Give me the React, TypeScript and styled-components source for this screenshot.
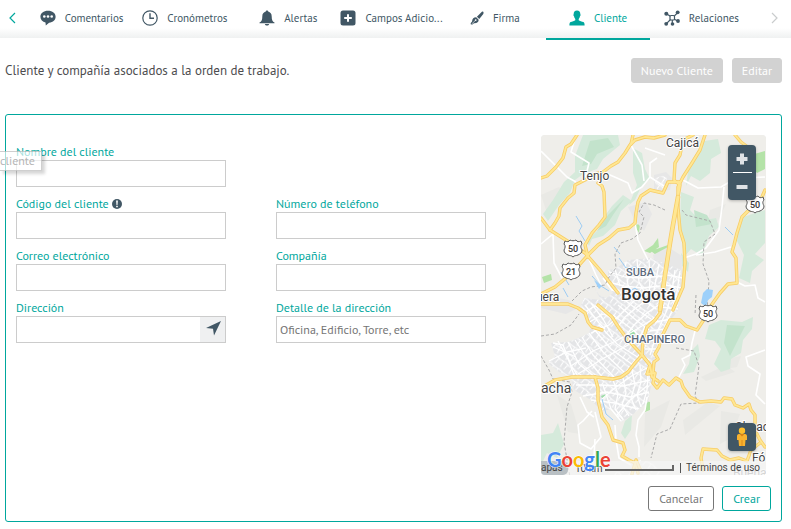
import React, { useId } from "react";
import styled, { createGlobalStyle, css } from "styled-components";

const teal = "#00a79d";
const slate = "#415765";

const GlobalStyle = createGlobalStyle`
  *, *::before, *::after { box-sizing: border-box; }
  body {
    margin: 0;
    background: #fff;
    color: #4d4d4f;
    font-family: "PT Sans", "Noto Sans", sans-serif;
    font-size: 12px;
    overflow-x: hidden;
  }
  button, input { font: inherit; }
`;

/* ---------- Tab bar ---------- */

const TabBar = styled.nav`
  display: flex;
  height: 38px;
  background: linear-gradient(#fff 28px, #eff1f1 38px);
`;

const TabList = styled.div`
  display: flex;
  flex: 1;
  min-width: 0;
`;

const Arrow = styled.button<{ $wide?: boolean; $muted?: boolean }>`
  display: flex;
  flex: none;
  align-items: center;
  justify-content: ${(p) => (p.$wide ? "center" : "flex-start")};
  width: ${(p) => (p.$wide ? 38 : 30)}px;
  height: 36px;
  padding: ${(p) => (p.$wide ? "0 0 0 4px" : "0 0 0 9px")};
  border: 0;
  background: none;
  color: ${(p) => (p.$muted ? "#c9cccd" : teal)};
`;

const Tab = styled.button<{ $active?: boolean }>`
  display: flex;
  flex: 1 1 0;
  align-items: center;
  justify-content: center;
  gap: 9px;
  min-width: 0;
  height: 40px;
  padding: 0 0 2px;
  border: 0;
  border-bottom: 2px solid ${(p) => (p.$active ? teal : "transparent")};
  background: none;
  color: ${(p) => (p.$active ? teal : slate)};
  font-size: 11px;
  white-space: nowrap;
  svg { flex: none; }
`;

/* ---------- Page ---------- */

const Page = styled.main`
  padding: 20px 9px 7px 5px;
`;

const Heading = styled.header`
  display: flex;
  align-items: center;
  gap: 9px;
  margin-bottom: 31px;
`;

const Title = styled.p`
  flex: 1;
  margin: 0;
  font-size: 13px;
  line-height: 25px;
`;

const Button = styled.button<{ $kind: "disabled" | "plain" | "primary" }>`
  height: 25px;
  padding: 0 10px;
  border: 1px solid;
  border-radius: 3px;
  background: #fff;
  font-size: 12px;
  line-height: 16px;
  white-space: nowrap;
  ${(p) =>
    p.$kind === "disabled" &&
    css`
      padding: 0 9px;
      border-color: #d2d2d2;
      background: #d2d2d2;
      color: #fff;
    `}
  ${(p) => p.$kind === "plain" && css`border-color: #777; color: #777;`}
  ${(p) => p.$kind === "primary" && css`border-color: ${teal}; color: ${teal};`}
`;

const Panel = styled.form`
  position: relative;
  padding: 20px 10px 10px;
  border: 1px solid ${teal};
  border-radius: 3px;
`;

const PanelBody = styled.div`
  display: flex;
  justify-content: space-between;
  gap: 30px;
  padding-right: 5px;
`;

const Fields = styled.div`
  display: grid;
  flex: 1;
  grid-template-columns: repeat(2, minmax(0, 210px));
  column-gap: 50px;
  row-gap: 9px;
  align-content: start;
  padding-top: 9px;
`;

const Field = styled.div<{ $rowStart?: boolean }>`
  ${(p) => p.$rowStart && css`grid-column-start: 1;`}
`;

const LabelRow = styled.div`
  display: flex;
  align-items: center;
  gap: 3px;
  height: 16px;
  color: ${teal};
  font-size: 12px;
  line-height: 18px;
`;

const InputBox = styled.div`
  display: flex;
  height: 27px;
  border: 1px solid #ccc;
  background: #fff;
`;

const Input = styled.input`
  flex: 1;
  min-width: 0;
  padding: 0 3px;
  border: 0;
  outline: 0;
  background: none;
  color: #4d4d4f;
  font-size: 12px;
  &::placeholder { color: #757575; opacity: 1; }
`;

const LocateButton = styled.button`
  display: flex;
  align-items: center;
  justify-content: center;
  width: 25px;
  padding: 0 0 2px 2px;
  border: 0;
  background: #eff0f1;
  color: ${slate};
`;

const Actions = styled.div`
  display: flex;
  justify-content: flex-end;
  gap: 8px;
  margin-top: 11px;
`;

const Tooltip = styled.div`
  position: absolute;
  top: 36px;
  left: -6px;
  padding: 0 6px 0 0;
  border: 1px solid rgba(118, 118, 118, 0.35);
  border-left: 0;
  background: rgba(255, 255, 255, 0.65);
  box-shadow: 3px 3px 3px rgba(0, 0, 0, 0.16);
  color: #b5b5b5;
  font-size: 12px;
  line-height: 18px;
`;

/* ---------- Map ---------- */

const MapFrame = styled.div`
  position: relative;
  flex: 0 0 225px;
  height: 340px;
  overflow: hidden;
  border-radius: 4px;
  background: #efeeea;
`;

const ZoomBox = styled.div`
  position: absolute;
  top: 10px;
  right: 10px;
  display: flex;
  flex-direction: column;
  align-items: center;
  width: 28px;
  border-radius: 4px;
  background: ${slate};
  box-shadow: 0 1px 3px rgba(0, 0, 0, 0.25);
`;

const ZoomButton = styled.button`
  display: flex;
  align-items: center;
  justify-content: center;
  width: 28px;
  height: 27px;
  padding: 0;
  border: 0;
  background: none;
  color: #dfe3e6;
`;

const ZoomRule = styled.span`
  width: 19px;
  height: 1px;
  background: #fff;
`;

const Pegman = styled.button`
  position: absolute;
  right: 10px;
  bottom: 24px;
  display: flex;
  align-items: center;
  justify-content: center;
  width: 28px;
  height: 28px;
  padding: 0;
  border: 0;
  border-radius: 4px;
  background: ${slate};
  box-shadow: 0 1px 3px rgba(0, 0, 0, 0.25);
`;

const MapFooter = styled.div`
  position: absolute;
  right: 0;
  bottom: 0;
  left: 0;
  display: flex;
  align-items: center;
  height: 14px;
  background: rgba(245, 245, 245, 0.7);
  color: #444;
  font-family: Roboto, sans-serif;
  font-size: 10px;
`;

const DataChip = styled.span`
  width: 27px;
  border-radius: 0 5px 5px 0;
  background: #b9c0c4;
  line-height: 14px;
`;

const ScaleText = styled.span`
  margin-left: 7px;
  width: 30px;
`;

const ScaleLine = styled.span`
  width: 69px;
  height: 6px;
  border: solid #666;
  border-width: 0 2px 2px 0;
`;

const Terms = styled.a`
  margin-left: 6px;
  padding-left: 5px;
  border-left: 1px solid #555;
  color: #444;
  line-height: 10px;
  white-space: nowrap;
  text-decoration: none;
`;

const GoogleMark = styled.a`
  position: absolute;
  bottom: 1px;
  left: 6px;
  height: 26px;
  text-decoration: none;
`;

/* ---------- Icons ---------- */

const Svg = ({ size = 16, children }: { size?: number; children: React.ReactNode }) => (
  <svg width={size} height={size} viewBox="0 0 16 16" fill="currentColor" aria-hidden="true">
    {children}
  </svg>
);

const CommentIcon = () => (
  <Svg>
    <path d="M8 .8C3.600.8.4 3.200.4 6.800c0 3 2.100 5 5.100 5.700L5.800 15.600l3.300-2.900c4-.3 6.500-2.700 6.500-5.900C15.600 3.200 12.400.8 8 .8z" />
    <g fill="#fff"><circle cx="4.300" cy="6.500" r="1.300" /><circle cx="8" cy="6.500" r="1.300" /><circle cx="11.700" cy="6.500" r="1.300" /></g>
  </Svg>
);
const ClockIcon = () => (
  <Svg>
    <g fill="none" stroke="currentColor" strokeWidth="1.200"><circle cx="8" cy="8" r="7.200" /><path d="M8 3.200V8.300h4" strokeWidth="1.400" /></g>
  </Svg>
);
const BellIcon = () => (
  <Svg>
    <path d="M8 .5c.8 0 1.200.5 1.200 1.100 2.200.6 3.500 2.400 3.500 4.800 0 3.600.8 4.900 2.800 6.200v.7H.5v-.7c2-1.300 2.800-2.600 2.800-6.200 0-2.400 1.300-4.200 3.500-4.800C6.800 1 7.200.5 8 .5zM5.800 14h4.400c-.4 1-1.100 1.500-2.200 1.500S6.200 15 5.800 14z" />
  </Svg>
);
const PlusBoxIcon = () => (
  <Svg>
    <rect x=".5" y=".5" width="15" height="15" rx="2.500" />
    <path d="M8 4.200v7.600M4.200 8h7.600" stroke="#fff" strokeWidth="2" />
  </Svg>
);
const BrushIcon = () => (
  <Svg size={14}>
    <path d="M14.500.7c1.100.2 1.300 1.600.7 2.700L10.600 9 7.900 6.500 13 1.400c.5-.5.900-.8 1.500-.7zM7.100 7.200l2.800 2.700c.1 2.500-1.900 4.200-5.200 4-.9.100-1.500 1.800-3.100 1.600-.8-.2-1.100-.9-.7-1.600.4-1 1.400-1 1.500-2.100.2-2.900 2-4.700 4.700-4.600z" />
    <path d="M2 14.800l4-3.900" stroke="#fff" strokeWidth=".7" /><circle cx="6.500" cy="10.300" r="1" fill="#fff" />
  </Svg>
);
const UserIcon = () => (
  <Svg>
    <path d="M8 .5c2.200 0 3.500 1.500 3.300 3.800.7.500.2 1.600-.3 2-.2 1.200-.6 2-1.300 2.600v1.300c1 .9 3.100 1.100 4.700 1.900 1 .5 1.200 1.600 1.200 3.400H.4c0-1.800.2-2.900 1.200-3.400 1.600-.8 3.700-1 4.700-1.900V8.900C5.600 8.300 5.200 7.500 5 6.300c-.5-.4-1-1.500-.3-2C4.500 2 5.800.5 8 .5z" />
  </Svg>
);
const NetworkIcon = () => (
  <Svg>
    <path d="M2.400 3.800l4 2.500M13.800 2.500L10 6.300M2.200 13.800L6.500 9.500M8.300 9v5M10 9l4 2.200" stroke="currentColor" strokeWidth="1.200" />
    <rect x="6" y="5.500" width="4.500" height="4.500" rx="1" fill="#fff" stroke="currentColor" strokeWidth="1.200" />
    <circle cx="2.300" cy="3.700" r="2" /><circle cx="13.700" cy="2.300" r="1.900" /><circle cx="2.200" cy="13.800" r="1.900" /><circle cx="8.500" cy="14" r="1.800" /><circle cx="14" cy="11" r="1.900" />
  </Svg>
);

/* ---------- Map drawing ---------- */

const highways = [
  "M36 0L30 9 25 12 22 23 15 32 6 41 0 43",
  "M124 0L113 3 104 2 94 5 89 10 84 18 77 27 70 31 62 37 54 39 44 45 34 50 33 58 27 63 19 73 18 81 14 88 9 95",
  "M92 0L90 9",
  "M57 48L61 51 63 57 64 82 58 90 51 98 44 110 47 122",
  "M0 83L9 95 28 107 44 118 59 135 77 158",
  "M139 47L127 47 122 58 109 55 100 61 97 67 95 78 94 88 88 93 77 95 68 103 57 110 47 120 31 138 14 152 0 159",
  "M152 0L142 5 139 20 134 28 133 45 139 50 137 62 132 90 129 108 124 140 119 175",
  "M164 0L159 15 151 28 142 42 137 52 137 73 139 95 143 108 144 128 142 152 132 175",
  "M194 0L200 7 208 13",
  "M224 55L221 62 216 72 207 76 201 82 196 98 193 110 191 117 195 123 196 148 187 149 179 158 169 172",
  "M0 169L27 169 37 173 44 178 47 187 51 192 61 195",
  "M57 170L71 182 78 193 87 205 101 220 109 230 111 242 117 246",
  "M0 253L14 245 31 242 54 242 72 244 80 242 87 237 94 228 101 220 102 205 106 192 114 185 119 178 121 165",
  "M54 242L57 253 57 265 61 282 67 290 72 305 82 308 84 315 81 321 88 325 94 328 97 338",
  "M101 220L109 230 106 239 114 238 112 248 116 253 122 245 128 250 135 243 140 246 142 252 149 262 159 267 170 266 180 267 183 263 191 264 194 270 202 273 208 269 210 275 214 280 214 295 219 305 224 312",
  "M112 237L113 227 117 224 114 219 118 212 120 203 129 185 139 185 145 191 156 195 166 180",
  "M162 335L160 323 162 314 176 315 181 321 189 325 198 323 206 326 210 315 219 308",
  "M91 339L95 325 99 334",
];

const parks = [
  "M42 0L77 0 79 10 62 24 56 34 42 39 34 45 29 58 18 70 7 86 2 79 12 65 23 47 34 37 34 21z",
  "M82 60L91 66 80 76 74 90 62 101 51 104 48 111 45 106 57 95 63 82 71 71z",
  "M92 13L101 18 104 34 109 44 101 50 94 65 88 70 96 50 92 38z",
  "M163 6L177 4 180 18 170 24 169 38 159 46 150 41 145 51 148 30z",
  "M140 57L153 62 149 75 159 86 175 83 178 92 168 101 161 121 150 114 143 122 139 92z",
  "M199 83L224 75 224 108 214 119 223 125 211 136 209 148 198 143 203 120 196 106z",
  "M180 185L201 187 212 182 211 194 202 205 200 218 190 224 189 234 180 237 173 229 180 214 174 206 164 204 168 190z",
  "M150 216L157 209 159 221 153 237 142 239 148 229z",
  "M0 300L12 298 17 288 23 309 16 323 6 318 0 330z",
  "M84 286L91 280 90 295 84 304 80 298z",
  "M140 118L148 128 147 137 141 131z",
];

const city =
  "M53 152L58 160 65 163 72 158 67 148 67 135 74 134 87 125 110 123 128 130 140 135 137 175 128 188 121 202 117 218 112 242 109 256 107 267 97 275 90 281 80 287 72 274 61 276 50 265 33 255 30 242 18 237 7 228 14 221 10 208 27 207 40 202 48 198 50 190 42 180 40 170 43 163 60 165z";

const whiteRoads = [
  "M0 16L12 28 26 42 35 47", "M35 0L30 17 48 28 44 44", "M62 37L76 43 87 48 91 58 101 52 109 42 109 28 116 23",
  "M90 10L101 30 103 46", "M104 13L124 20", "M109 42L123 51", "M142 45L157 53 180 52 192 45 205 43 224 42",
  "M183 52L181 72 178 95 165 113 155 119 143 123", "M155 120L174 117 190 112", "M196 147L204 151 214 150 217 163 224 167",
  "M94 88L97 105 107 125", "M0 109L12 99 13 128 21 143", "M154 196L151 208 149 220 141 224 144 230 138 242",
  "M224 215L205 222 207 231 219 239 215 260 224 269", "M51 276L42 286 37 290 39 308 50 314 60 302 54 277",
  "M39 262L46 277 53 282", "M54 304L52 339", "M74 290L75 305 78 323 90 330",
  "M106 262L104 275 97 285 95 300 98 312 98 322", "M62 143L71 155 80 158M47 122L55 140 60 150",
];

const streets = [
  "M12 208L22 210 30 230 38 243", "M17 206L28 226 33 240", "M8 226L26 217 45 213", "M12 212L35 222",
  "M27 207L38 229 55 243", "M34 205L45 222 62 243", "M41 202L52 220 74 243", "M48 198L62 217 84 238", "M52 193L70 214 92 230",
  "M58 190L76 209 98 223", "M44 170L58 188 64 194", "M50 168L62 184 72 202", "M42 178L54 171 66 176", "M47 188L62 179 74 184",
  "M50 198L68 190 82 177 93 166 106 160", "M30 231L52 216 75 206 96 194 117 181", "M37 239L63 223 89 209 101 205",
  "M35 250L60 250 82 251 109 245", "M42 261L66 257 89 262 108 257", "M50 265L74 268 97 274", "M62 250L70 274 80 286",
  "M72 245L77 259 74 274 82 284", "M82 243L85 258 81 270 88 281", "M91 235L94 250 90 263 95 275", "M99 230L100 247 96 260 100 272",
  "M107 240L106 255 102 269", "M60 265L75 252 92 240 108 232", "M76 280L88 266 107 250",
  "M72 180L92 195 107 209", "M77 170L95 185 108 195", "M81 163L98 176 110 184", "M90 154L104 166 115 174",
  "M76 193L84 182 95 173 112 160", "M84 202L93 190 106 178 119 169", "M92 210L100 200 104 191", "M68 137L84 142 101 143 122 141",
  "M67 147L83 151 101 153 119 151", "M74 134L79 151", "M84 127L87 150 94 160", "M96 124L98 147 105 160", "M108 125L109 143 108 160",
  "M118 129L114 150 112 160", "M126 140L142 143", "M124 150L141 153", "M122 160L139 163", "M120 172L137 174", "M114 187L130 184",
  "M109 196L124 194", "M106 206L121 204", "M104 214L118 214", "M134 135L131 156 126 175 117 195 109 220", "M139 136L136 157 130 178 121 198 113 222",
];

const shield = (x: number, y: number, label: string) => (
  <g key={`${x}-${y}`} transform={`translate(${x} ${y})`}>
    <path d="M-8-7c2 1 4 1 5-1 2 1 4 1 6 0 1 2 3 2 5 1l1 3c-2 2-1 4 0 6 0 3-2 4-4 5-2 1-3 0-5 2-2-2-3-1-5-2-2-1-4-2-4-5 1-2 2-4 0-6z" fill="#fff" stroke="#555" />
    <text y="4" textAnchor="middle" fontSize="9" fontWeight="500" fill="#333">{label}</text>
  </g>
);

const CityMap = () => (
  <svg width="100%" height="100%" viewBox="0 0 225 340" preserveAspectRatio="xMidYMid slice" fontFamily="Roboto, sans-serif" role="img" aria-label="Mapa de Bogotá">
    <defs>
      <pattern id="blocks" width="11" height="9" patternUnits="userSpaceOnUse" patternTransform="rotate(38)">
        <path d="M0 3L5 2 11 3M3 2L4 9M9 3L8 9" fill="none" stroke="#fff" strokeWidth="1" />
      </pattern>
    </defs>
    <rect width="225" height="340" fill="#efeeea" />
    <path d="M160 242l25-12 9 7-29 9zM142 285l25-18 12 4-35 29zM0 60l18-8 8 8-20 18zM169 75l16-6-8 17-12 9zM180 225l20-4-4 11-17 3zM16 260l14 9 9 30-12-2zM180 276l19 3-9 24-11 6zM104 278l25-13-9 27-17 20z" fill="#e9e9e5" />
    {parks.map((d) => <path key={d} d={d} fill="#d5eadb" />)}
    <path d="M49 6L67 3 73 12 56 19 50 29 41 31z M83 64L72 80 65 91 56 96 67 80z M153 75l13 5 5 9-16 3z M186 190l18 1-8 16-7 14-6-13z" fill="#c3e3cc" />
    <path d="M210 20L224 16 224 34 216 38 211 32zM103 116l9-6 5-7 1 9-9 6zM93 90l6-1-1 9zM104 266l5 1v8l-5 2zM1 142l9-3 1 6-8 3zM110 116l17-6 1 5-13 5z" fill="#b4e3a8" />
    <path d="M113 40l12-3 6 6-2 12-16 2zM87 72l18-5 6 12-8 17-10-12zM112 120l15-8 14 9-1 40-19 7zM0 160l28 5 9 8-12 6-25-6z" fill="#e7e7e7" />
    <path d={city} fill="#e4e5e7" />
    <path d={city} fill="url(#blocks)" />
    <path d="M113 43l12-3 3 13-12 2zM67 337h23l6-13 17 4 8 12H70z" fill="url(#blocks)" />
    <path d="M88 198l5-4 1 5-4 3zM60 261l5-2v3l-4 1z" fill="#9ddda8" />
    <g fill="none" stroke="#fff" strokeLinejoin="round">
      <g strokeWidth="1.600">{whiteRoads.map((d) => <path key={d} d={d} />)}</g>
      <g strokeWidth="1.300">{streets.map((d) => <path key={d} d={d} />)}</g>
    </g>
    <g fill="none" stroke="#aaa" strokeWidth="1" strokeDasharray="3 2">
      <path d="M124 75L113 70 103 68 98 77 103 82 99 98 91 104 80 108 74 119 75 133 68 142 64 150 50 152 41 156 31 166" />
      <path d="M141 75l4 5 24 6 5 13-11 8-1 22 6 17-2 29" />
      <path d="M0 201l14-2 16-9 8-11M0 221l8 14 4 9 17 3 2 10-5 15-3 35 6 35" />
      <path d="M155 160l-1 20M135 213l18 3 5 15-4 30 4 7-18 1-11 25-13 5-6 24" />
    </g>
    <g fill="none" stroke="#9dccf3" strokeWidth="1">
      <path d="M35 81l6 10-3 5 6 10M73 112l6 7M51 141l9 10 8 5M20 137l8 13M61 264l4 15 7 6M184 92l8 8M27 162l-5-9M78 123l7 10 10-1 5 9M85 159l9-6 6 5" />
    </g>
    <path d="M162 158l4-4 6 1-1 7-4 3-2 7-5-4z" fill="#9dd0fa" /><path d="M53 145l8 6-3 3z" fill="#9dd0fa" />
    <g fill="none" strokeLinejoin="round" strokeLinecap="round">
      {highways.map((d) => <path key={d} d={d} stroke="#f7cd68" strokeWidth="3.400" />)}
      {highways.map((d) => <path key={d} d={d} stroke="#ffe793" strokeWidth="1.800" />)}
      <path d="M137 62L132 90 129 108 124 140 119 175" stroke="#f7cd68" strokeWidth="4.600" />
      <path d="M137 62L132 90 129 108 124 140 119 175" stroke="#ffe793" strokeWidth="3" />
    </g>
    {shield(32, 113, "50")}{shield(30, 136, "21")}{shield(214, 69, "50")}{shield(167, 178, "50")}
    <g fill="#444" stroke="#fff" strokeWidth="2" strokeLinejoin="round" paintOrder="stroke">
      <text x="39" y="45" fontSize="12">Tenjo</text>
      <text x="125" y="12" fontSize="12">Cajicá</text>
      <text x="-5" y="166" fontSize="12">uera</text>
      <text x="0" y="258" fontSize="14">acha</text>
      <text x="80" y="165" fontSize="17" fontWeight="500" fill="#333">Bogotá</text>
      <text x="85" y="141" fontSize="11" fontWeight="500" fill="#5d6b7c">SUBA</text>
      <text x="83" y="208" fontSize="11" fontWeight="500" fill="#5d6b7c">CHAPINERO</text>
      <text x="194" y="296" fontSize="12">Choac</text>
      <text x="211" y="327" fontSize="12">Fó</text>
      <text x="192" y="342" fontSize="12" fill="#888">Buena</text>
    </g>
  </svg>
);

/* ---------- Composition ---------- */

const tabs = [
  { label: "Comentarios", icon: <CommentIcon /> },
  { label: "Cronómetros", icon: <ClockIcon /> },
  { label: "Alertas", icon: <BellIcon /> },
  { label: "Campos Adicio...", icon: <PlusBoxIcon /> },
  { label: "Firma", icon: <BrushIcon /> },
  { label: "Cliente", icon: <UserIcon />, active: true },
  { label: "Relaciones", icon: <NetworkIcon /> },
];

type TextFieldProps = {
  label: string;
  placeholder?: string;
  rowStart?: boolean;
  hint?: React.ReactNode;
  action?: React.ReactNode;
};

const TextField = ({ label, placeholder, rowStart, hint, action }: TextFieldProps) => {
  const id = useId();
  return (
    <Field $rowStart={rowStart}>
      <LabelRow><label htmlFor={id}>{label}</label>{hint}</LabelRow>
      <InputBox><Input id={id} type="text" placeholder={placeholder} />{action}</InputBox>
    </Field>
  );
};

const InfoIcon = () => (
  <svg width="10" height="10" viewBox="0 0 10 10" aria-hidden="true">
    <circle cx="5" cy="5" r="5" fill={slate} />
    <path d="M4.100 1.600h1.800L5.500 6h-1zM4.200 6.800h1.600v1.500H4.200z" fill="#fff" />
  </svg>
);

const Chevron = ({ left }: { left?: boolean }) => (
  <svg width="7" height="12" viewBox="0 0 7 12" fill="none" stroke="currentColor" strokeWidth="1.200" aria-hidden="true">
    <path d={left ? "M6 1L1 6l5 5" : "M1 1l5 5-5 5"} />
  </svg>
);

export default function App() {
  return (
    <>
      <GlobalStyle />
      <TabBar>
        <Arrow type="button" aria-label="Anterior"><Chevron left /></Arrow>
        <TabList role="tablist">
          {tabs.map((t) => (
            <Tab key={t.label} type="button" role="tab" aria-selected={!!t.active} $active={t.active}>
              {t.icon}<span>{t.label}</span>
            </Tab>
          ))}
        </TabList>
        <Arrow type="button" aria-label="Siguiente" $wide $muted><Chevron /></Arrow>
      </TabBar>
      <Page>
        <Heading>
          <Title>Cliente y compañía asociados a la orden de trabajo.</Title>
          <Button type="button" disabled $kind="disabled">Nuevo Cliente</Button>
          <Button type="button" disabled $kind="disabled">Editar</Button>
        </Heading>
        <Panel>
          <PanelBody>
            <Fields>
              <TextField label="Nombre del cliente" />
              <TextField label="Código del cliente" rowStart hint={<InfoIcon />} />
              <TextField label="Número de teléfono" />
              <TextField label="Correo electrónico" />
              <TextField label="Compañía" />
              <TextField
                label="Dirección"
                action={
                  <LocateButton type="button" aria-label="Ubicar dirección">
                    <svg width="15" height="15" viewBox="0 0 15 15" fill="currentColor" aria-hidden="true"><path d="M15 0L8 14.500 7 7.800 0 7z" /></svg>
                  </LocateButton>
                }
              />
              <TextField label="Detalle de la dirección" placeholder="Oficina, Edificio, Torre, etc" />
            </Fields>
            <MapFrame>
              <CityMap />
              <ZoomBox>
                <ZoomButton type="button" aria-label="Acercar">
                  <svg width="12" height="12" viewBox="0 0 12 12" stroke="currentColor" strokeWidth="4" aria-hidden="true"><path d="M6 .5v11M.5 6h11" /></svg>
                </ZoomButton>
                <ZoomRule />
                <ZoomButton type="button" aria-label="Alejar">
                  <svg width="12" height="12" viewBox="0 0 12 12" stroke="currentColor" strokeWidth="4" aria-hidden="true"><path d="M.5 6h11" /></svg>
                </ZoomButton>
              </ZoomBox>
              <Pegman type="button" aria-label="Street View">
                <svg width="12" height="20" viewBox="0 0 12 20" aria-hidden="true">
                  <path d="M3 7h6c1.500 0 2 1 2 2.500V13H9.500L9 19H3l-.5-6H1V9.500C1 8 1.500 7 3 7z" fill="#f9b32f" />
                  <path d="M3.500 7h5L6 9.500zM5.600 13h.8v6h-.8z" fill="#d98315" /><circle cx="6" cy="3.800" r="3.200" fill="#fdbf2d" />
                </svg>
              </Pegman>
              <MapFooter>
                <DataChip>apas</DataChip>
                <ScaleText>10 km</ScaleText>
                <ScaleLine />
                <Terms href="#terminos">Términos de uso</Terms>
              </MapFooter>
              <GoogleMark href="#google" aria-label="Google">
                <svg width="66" height="26" viewBox="0 0 66 26" fontFamily="Lato, sans-serif" fontSize="20" fontWeight="700" stroke="#fff" strokeWidth="1" paintOrder="stroke">
                  <text x="0" y="19"><tspan fill="#4285f4">G</tspan><tspan fill="#ea4335">o</tspan><tspan fill="#fbbc05">o</tspan><tspan fill="#4285f4">g</tspan><tspan fill="#34a853">l</tspan><tspan fill="#ea4335">e</tspan></text>
                </svg>
              </GoogleMark>
            </MapFrame>
          </PanelBody>
          <Actions>
            <Button type="button" $kind="plain">Cancelar</Button>
            <Button type="submit" $kind="primary">Crear</Button>
          </Actions>
          <Tooltip role="tooltip">cliente</Tooltip>
        </Panel>
      </Page>
    </>
  );
}
